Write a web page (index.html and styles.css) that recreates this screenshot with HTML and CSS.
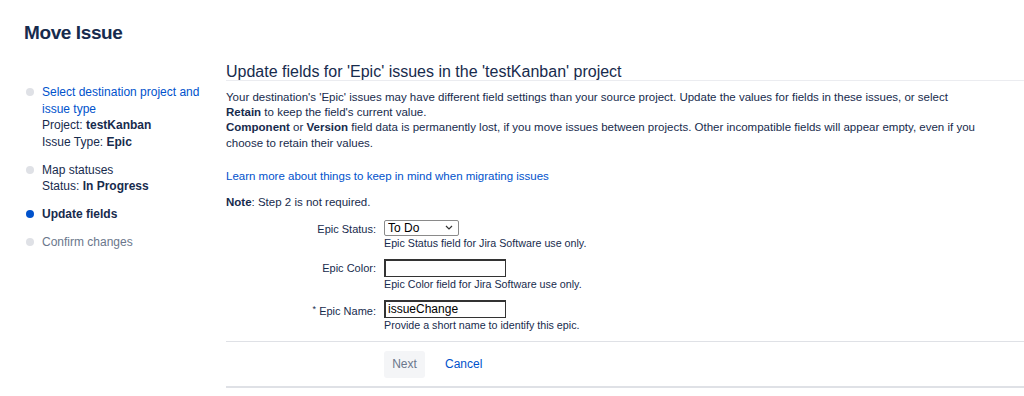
FILE: index.html
```html
<!DOCTYPE html>
<html lang="en">
<head>
  <meta charset="UTF-8" />
  <title>Move Issue</title>
  <link rel="stylesheet" href="styles.css">
</head>
<body>
  <h1 class="page-title">Move Issue</h1>

  <div class="layout">
    <ul class="steps">
      <li class="step done">
        <a href="#">Select destination project and issue type</a>
        <div>Project: <b>testKanban</b></div>
        <div>Issue Type: <b>Epic</b></div>
      </li>
      <li class="step done">
        <div>Map statuses</div>
        <div>Status: <b>In Progress</b></div>
      </li>
      <li class="step current">Update fields</li>
      <li class="step todo">Confirm changes</li>
    </ul>

    <div class="main">
      <h2 class="heading">Update fields for 'Epic' issues in the 'testKanban' project</h2>

      <p class="intro">
        Your destination's 'Epic' issues may have different field settings than your source project. Update the values for fields in these issues, or select<br>
        <b>Retain</b> to keep the field's current value.<br>
        <b>Component</b> or <b>Version</b> field data is permanently lost, if you move issues between projects. Other incompatible fields will appear empty, even if you<br>
        choose to retain their values.
      </p>

      <p class="learn"><a href="#">Learn more about things to keep in mind when migrating issues</a></p>

      <p class="note"><b>Note</b>: Step 2 is not required.</p>

      <div class="form">
        <div class="row">
          <label class="label">Epic Status:</label>
          <div class="field">
            <select class="select">
              <option>To Do</option>
            </select>
            <div class="desc">Epic Status field for Jira Software use only.</div>
          </div>
        </div>
        <div class="row">
          <label class="label">Epic Color:</label>
          <div class="field">
            <input class="text" type="text" value="">
            <div class="desc">Epic Color field for Jira Software use only.</div>
          </div>
        </div>
        <div class="row">
          <label class="label"><span class="req">*</span> Epic Name:</label>
          <div class="field">
            <input class="text" type="text" value="issueChange">
            <div class="desc">Provide a short name to identify this epic.</div>
          </div>
        </div>
      </div>

      <div class="buttons">
        <button class="next" disabled>Next</button>
        <a class="cancel" href="#">Cancel</a>
      </div>
    </div>
  </div>
</body>
</html>
```

FILE: styles.css
```css
body {
  font-family: 'Liberation Sans', Arial, sans-serif;
  color: #172b4d;
  background: #fff;
  margin: 0;
}

a {
  color: #0052cc;
  text-decoration: none;
}

.page-title {
  font-size: 19px;
  font-weight: 700;
  margin: 0;
  padding: 21px 24px 0;
  line-height: 24px;
  letter-spacing: -0.4px;
}

.layout {
  display: flex;
  padding-left: 26px;
  margin-top: 19px;
}

/* wizard steps */
.steps {
  list-style: none;
  margin: 20px 0 0;
  padding: 0;
  width: 200px;
  font-size: 12px;
  line-height: 16.5px;
}

.step {
  position: relative;
  padding-left: 16px;
  margin-bottom: 11.5px;
}

.step::before {
  content: '';
  position: absolute;
  left: 0;
  top: 4px;
  width: 8px;
  height: 8px;
  border-radius: 50%;
  background: #dfe1e6;
}

.step.current {
  font-weight: bold;
}

.step.current::before {
  background: #0052cc;
}

.step.todo {
  color: #6b778c;
}

/* main column */
.main {
  flex: 1;
}

.heading {
  font-size: 16px;
  font-weight: 500;
  line-height: 16px;
  margin: 0;
  padding-bottom: 0;
  border-bottom: 1px solid #ebecf0;
}

.intro, .learn, .note {
  font-size: 11.5px;
  line-height: 15.4px;
  margin: 0;
}

.intro {
  margin-top: 8.5px;
}

.learn {
  margin-top: 17.5px;
}

.note {
  margin-top: 10.5px;
}

.form {
  margin-top: 10px;
  font-size: 11px;
}

.row {
  display: flex;
  gap: 8px;
  margin-bottom: 8px;
}

.label {
  width: 150px;
  text-align: right;
  line-height: 15px;
  padding-top: 2px;
}

.req {
  font-size: 9px;
  vertical-align: 3px;
}

.select {
  appearance: none;
  -webkit-appearance: none;
  display: block;
  width: 75px;
  height: 16px;
  box-sizing: border-box;
  font-family: 'Liberation Sans', Arial, sans-serif;
  font-size: 12px;
  line-height: 14px;
  color: #000;
  border: 1px solid #8a8a8a;
  border-radius: 2px;
  background: #fff url("data:image/svg+xml,%3Csvg xmlns='http://www.w3.org/2000/svg' width='8' height='5' viewBox='0 0 8 5'%3E%3Cpath d='M1 1l3 3 3-3' fill='none' stroke='%23333' stroke-width='1.2'/%3E%3C/svg%3E") no-repeat right 5px center;
  padding: 0 3px;
  margin: 0;
}

.text {
  display: block;
  width: 122px;
  height: 18px;
  box-sizing: border-box;
  border: 2px solid #333;
  border-width: 2px 1px 1px 2px;
  font-family: 'Liberation Sans', Arial, sans-serif;
  font-size: 12px;
  color: #000;
  padding: 0 2px;
  margin: 0;
}

.desc {
  font-size: 10.7px;
  line-height: 15px;
  margin-top: 0;
}

.buttons {
  border-top: 1px solid #dfe1e6;
  border-bottom: 2px solid #dfe1e6;
  display: flex;
  align-items: center;
  gap: 20px;
  padding: 9px 0 8px 158px;
  margin-top: 6.5px;
}

.next {
  height: 27px;
  width: 41px;
  padding: 0;
  border: none;
  border-radius: 3px;
  background: #f4f5f7;
  color: #6b778c;
  font-family: 'Liberation Sans', Arial, sans-serif;
  font-size: 12px;
}

.cancel {
  font-size: 12px;
}
```
